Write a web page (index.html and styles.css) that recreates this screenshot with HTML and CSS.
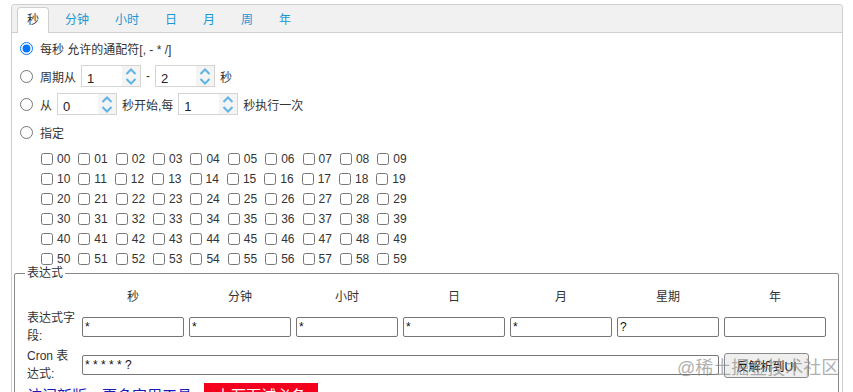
FILE: index.html
```html
<!DOCTYPE html>
<html lang="zh-CN">
<head>
  <meta charset="UTF-8" />
  <title>Cron 表达式生成器</title>
  <link rel="stylesheet" href="styles.css">
</head>
<body>
  <div class="cron-tabs">
    <ul class="tab-bar">
      <li class="tab active">秒</li>
      <li class="tab">分钟</li>
      <li class="tab">小时</li>
      <li class="tab">日</li>
      <li class="tab">月</li>
      <li class="tab">周</li>
      <li class="tab">年</li>
    </ul>

    <div class="tab-panel">
      <div class="opt-row">
        <input type="radio" name="second" checked />每秒 允许的通配符[, - * /]
      </div>
      <div class="opt-row">
        <input type="radio" name="second" />周期从
        <span class="spinner"><input type="text" value="1" /><span class="spin-btns"></span></span>-
        <span class="spinner"><input type="text" value="2" /><span class="spin-btns"></span></span>秒
      </div>
      <div class="opt-row">
        <input type="radio" name="second" />从
        <span class="spinner"><input type="text" value="0" /><span class="spin-btns"></span></span>秒开始,每
        <span class="spinner"><input type="text" value="1" /><span class="spin-btns"></span></span>秒执行一次
      </div>
      <div class="opt-row">
        <input type="radio" name="second" />指定
      </div>
      <div id="checkGrid" class="check-grid"></div>
    </div>

    <fieldset class="expr">
      <legend>表达式</legend>
      <div class="expr-grid">
        <div></div>
        <div class="col-head">秒</div>
        <div class="col-head">分钟</div>
        <div class="col-head">小时</div>
        <div class="col-head">日</div>
        <div class="col-head">月</div>
        <div class="col-head">星期</div>
        <div class="col-head">年</div>

        <div class="row-label">表达式字段:</div>
        <input class="field" type="text" value="*" />
        <input class="field" type="text" value="*" />
        <input class="field" type="text" value="*" />
        <input class="field" type="text" value="*" />
        <input class="field" type="text" value="*" />
        <input class="field" type="text" value="?" />
        <input class="field" type="text" value="" />

        <div class="row-label">Cron 表达式:</div>
        <input class="field cron-field" type="text" value="* * * * * ?" />
        <button class="parse-btn">反解析到UI</button>
      </div>
      <div class="promo">
        <span class="promo-link">访问新版，更多实用工具</span>
        <span class="promo-tag">上万面试必备</span>
      </div>
    </fieldset>
  </div>

  <div class="watermark">@稀土掘金技术社区</div>

  <script>
    const arrows = `
      <span class="spin-up"><svg width="12" height="7" viewBox="0 0 12 7"><path d="M1.5 6 L6 1.5 L10.5 6" fill="none" stroke="#5fb4e4" stroke-width="2"/></svg></span>
      <span class="spin-down"><svg width="12" height="7" viewBox="0 0 12 7"><path d="M1.5 1 L6 5.5 L10.5 1" fill="none" stroke="#5fb4e4" stroke-width="2"/></svg></span>`;
    document.querySelectorAll(".spin-btns").forEach(el => el.innerHTML = arrows);

    const grid = document.getElementById("checkGrid");
    let rows = "";
    for (let r = 0; r < 6; r++) {
      let items = "";
      for (let c = 0; c < 10; c++) {
        const n = String(r * 10 + c).padStart(2, "0");
        items += `<label class="check-item"><input type="checkbox" />${n}</label>`;
      }
      rows += `<div class="check-row">${items}</div>`;
    }
    grid.innerHTML = rows;
  </script>
</body>
</html>
```

FILE: styles.css
```css
body {
  margin: 0;
  font-family: "Liberation Sans", "Noto Sans CJK SC", sans-serif;
  font-size: 12px;
  color: #333;
  background: #fff;
  position: relative;
  overflow: hidden;
  height: 392px;
}

.cron-tabs {
  margin: 4px 10px 0 11px;
  border: 1px solid #cfcfcf;
  border-bottom: none;
  border-radius: 4px 4px 0 0;
  height: 400px;
}

.tab-bar {
  display: flex;
  margin: 0;
  padding: 2px 0 0 5px;
  list-style: none;
  background: #f1f1f1;
  border-bottom: 1px solid #cfcfcf;
  border-radius: 4px 4px 0 0;
}

.tab {
  height: 25px;
  line-height: 24px;
  padding: 0 9px;
  margin: 0 6px -1px 0;
  border: 1px solid transparent;
  border-bottom: none;
  border-radius: 4px 4px 0 0;
  color: #1b97d3;
}

.tab.active {
  background: #fff;
  border-color: #cfcfcf;
  color: #333;
}

.tab-panel {
  padding: 1px 8px 0;
}

.opt-row {
  display: flex;
  align-items: center;
  height: 28px;
}

.opt-row input[type="radio"] {
  width: 13px;
  height: 13px;
  margin: 0 7px 0 0;
}

.spinner {
  display: inline-flex;
  box-sizing: border-box;
  width: 60px;
  height: 22px;
  margin: 0 5px 0 5px;
  border: 1px solid #d4d4d4;
  background: #fff;
}

.spinner input {
  flex: 1;
  min-width: 0;
  border: 0;
  outline: none;
  padding: 4px 0 0 5px;
  font: inherit;
  font-size: 13px;
  color: #222;
}

.spin-btns {
  display: flex;
  flex-direction: column;
  width: 18px;
  background: #f4f4f4;
}

.spin-up, .spin-down {
  flex: 1;
  display: flex;
  align-items: center;
  justify-content: center;
}

.check-grid {
  padding: 3px 0 0 21px;
}

.check-row {
  display: flex;
  align-items: center;
  height: 20px;
}

.check-item {
  display: flex;
  align-items: center;
  margin-right: 8px;
  font-size: 12px;
}

.check-item input {
  width: 12px;
  height: 12px;
  margin: 0 4px 0 0;
}

.expr {
  margin: -3px 3px 0 2px;
  padding: 7px 12px 0;
  border: 1px solid #8a8a8a;
  border-radius: 2px;
}

.expr legend {
  padding: 0 2px;
  margin-left: -2px;
  line-height: 14px;
}

.expr-grid {
  display: grid;
  grid-template-columns: 50px repeat(7, 102px);
  grid-template-rows: 21px 38px 38px;
  column-gap: 5px;
  align-items: center;
}

.col-head {
  text-align: center;
  align-self: start;
  line-height: 20px;
}

.row-label {
  line-height: 18.5px;
}

.field {
  box-sizing: border-box;
  height: 20px;
  width: 100%;
  margin: 0;
  padding: 0 2px;
  border: 1px solid #767676;
  border-radius: 2px;
  font: inherit;
  color: #111;
}

.cron-field {
  grid-column: 2 / 8;
}

.parse-btn {
  justify-self: start;
  height: 25px;
  width: 85px;
  padding: 0;
  border: 1px solid #8a8a8a;
  border-radius: 3px;
  background: #efefef;
  font: inherit;
  color: #111;
}

.promo {
  display: flex;
  align-items: center;
  margin-top: -1px;
}

.promo-link {
  font-size: 15px;
  color: #1a1ab8;
}

.promo-tag {
  margin-left: 12px;
  padding: 1px 12px;
  background: #f5001c;
  color: #fff;
  font-size: 15px;
}

.watermark {
  position: absolute;
  left: 677px;
  top: 358px;
  font-size: 18px;
  line-height: 20px;
  color: rgba(140, 140, 140, 0.7);
  pointer-events: none;
}
```
